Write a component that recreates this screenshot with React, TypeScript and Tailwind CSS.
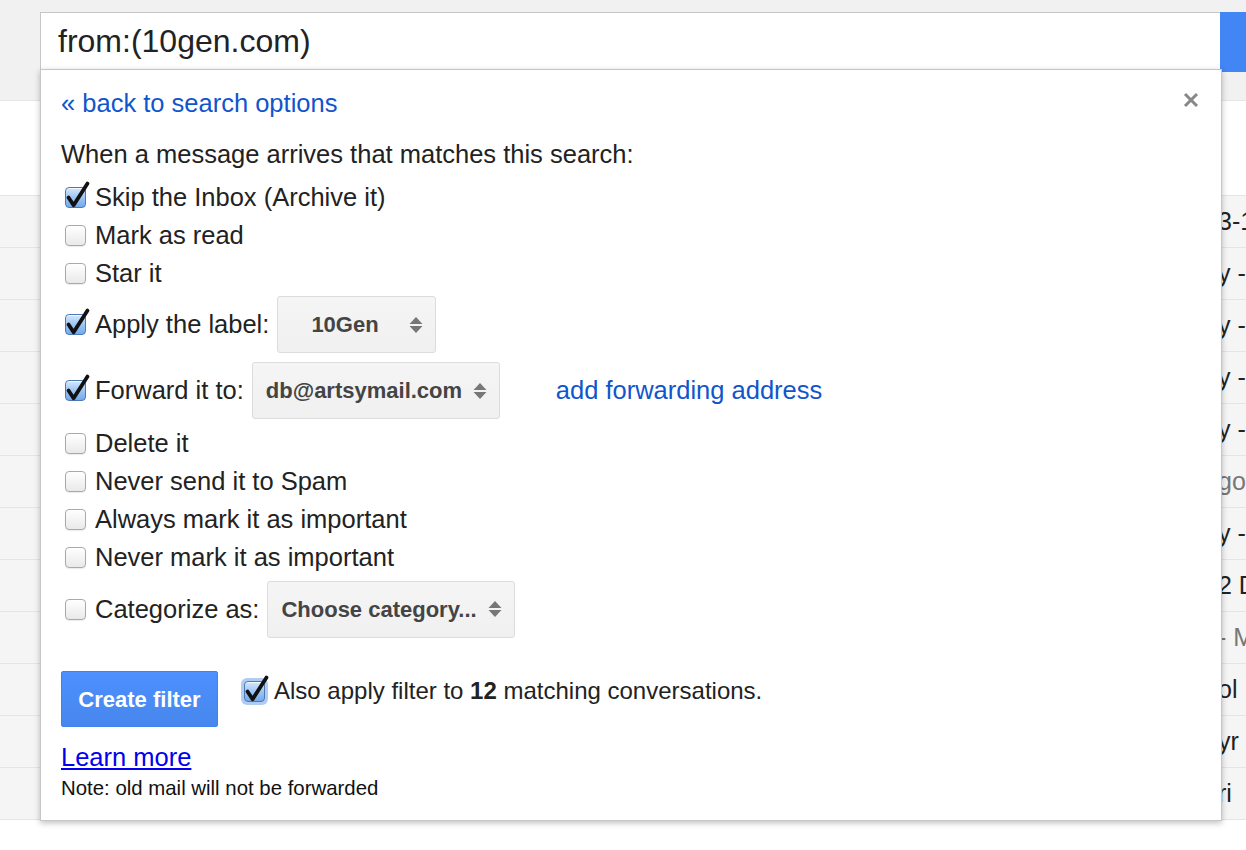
import React from 'react';

/**
 * Gmail "create filter" dropdown, shown under the search box.
 */

const font = "font-['Liberation_Sans',Arial,sans-serif]";

// Message list behind the dropdown: only a sliver of each row shows at the right edge
const listRows: { text: string; muted?: boolean }[] = [
  { text: '3-1' },
  { text: 'y -' },
  { text: 'y -' },
  { text: 'y -' },
  { text: 'y -' },
  { text: 'go', muted: true },
  { text: 'y -' },
  { text: '2 D' },
  { text: '- M', muted: true },
  { text: 'ol' },
  { text: 'yr' },
  { text: 'ri' },
];

function Checkbox({ checked = false, focused = false }: { checked?: boolean; focused?: boolean }) {
  return (
    <span className="relative inline-block w-[21px] h-[21px] shrink-0">
      {focused && (
        <span className="absolute -inset-[3px] rounded-[6px] bg-[#8fb6ea] opacity-70" />
      )}
      <span
        className={
          checked
            ? 'absolute inset-0 rounded-[4px] border border-[#4b79b8] bg-gradient-to-b from-[#d6e8fd] via-[#9ec5f4] to-[#74a9ec] shadow-[inset_0_1px_0_rgba(255,255,255,0.7)]'
            : 'absolute inset-0 rounded-[4px] border border-[#a9a9a9] bg-gradient-to-b from-[#ffffff] to-[#e9e9e9] shadow-[0_1px_1px_rgba(0,0,0,0.08)]'
        }
      />
      {checked && (
        <svg
          className="absolute left-0 top-0 overflow-visible"
          width="21"
          height="21"
          viewBox="0 0 21 21"
        >
          <path
            d="M3.5 10.5 L8.6 18.2 L22.5 -3.5"
            fill="none"
            stroke="#111"
            strokeWidth="3.8"
            strokeLinecap="round"
            strokeLinejoin="round"
          />
        </svg>
      )}
    </span>
  );
}

function SelectBox({ label, width, padLeft }: { label: string; width: string; padLeft: string }) {
  return (
    <div
      className={`flex items-center h-[57px] ${width} ${padLeft} pr-[12px] rounded-[3px] border border-[#dcdcdc] bg-gradient-to-b from-[#f5f5f5] to-[#f0f0f0] text-[22px] font-bold text-[#444]`}
    >
      <span className="flex-1 whitespace-nowrap">{label}</span>
      <svg width="14" height="18" viewBox="0 0 14 18" className="shrink-0">
        <path d="M7 1 L13.5 8 H0.5 Z" fill="#777" />
        <path d="M7 17 L13.5 10 H0.5 Z" fill="#777" />
      </svg>
    </div>
  );
}

function Row({
  checked,
  label,
  height = 'h-[38px]',
  children,
}: {
  checked?: boolean;
  label: string;
  height?: string;
  children?: React.ReactNode;
}) {
  return (
    <div className={`flex items-center ${height}`}>
      <span className="pl-[4px] pr-[9px] flex items-center">
        <Checkbox checked={checked} />
      </span>
      <span className="whitespace-nowrap">{label}</span>
      {children}
    </div>
  );
}

export default function App() {
  return (
    <div className={`relative w-[1246px] h-[850px] overflow-hidden bg-white text-[#222] ${font}`}>
      {/* Header with search box */}
      <div className="h-[101px] bg-[#f1f1f1] border-b border-[#e5e5e5] pt-[12px] pl-[40px] flex items-start">
        <div className="w-[1180px] h-[58px] border border-[#c6c6c6] border-r-0 bg-white flex items-center pl-[17px] text-[32px] text-[#222]">
          from:(10gen.com)
        </div>
        <div className="flex-1 h-[60px] bg-[#4285f4]" />
      </div>

      {/* Toolbar area */}
      <div className="h-[95px] border-b border-[#e5e5e5]" />

      {/* Message list (mostly hidden under the dropdown) */}
      <div>
        {listRows.map((r, i) => (
          <div
            key={i}
            className={`h-[52px] bg-[#f5f5f5] border-b border-[#e5e5e5] flex items-center pl-[1218px] text-[25px] whitespace-nowrap ${
              r.muted ? 'text-[#777]' : 'text-[#222]'
            }`}
          >
            {r.text}
          </div>
        ))}
      </div>

      {/* Filter dropdown */}
      <div className="absolute left-[40px] top-[69px] w-[1182px] h-[752px] bg-white border border-[#c6c6c6] shadow-[0_2px_6px_rgba(0,0,0,0.25)] pl-[20px] pt-[18px] text-[25.5px] text-[#222]">
        <button className="absolute right-[22px] top-[22px] w-[16px] h-[16px]">
          <svg width="16" height="16" viewBox="0 0 16 16">
            <path d="M2 2 L14 14 M14 2 L2 14" stroke="#888" strokeWidth="3" />
          </svg>
        </button>

        <div className="h-[30px] leading-[30px] text-[#15c]">« back to search options</div>
        <div className="mt-[21px] h-[30px] leading-[30px]">When a message arrives that matches this search:</div>

        <div className="mt-[9px]">
          <Row checked label="Skip the Inbox (Archive it)" />
          <Row label="Mark as read" />
          <Row label="Star it" />
          <Row checked label="Apply the label:" height="h-[65px]">
            <div className="ml-[8px]">
              <SelectBox label="10Gen" width="w-[159px]" padLeft="pl-[33px]" />
            </div>
          </Row>
          <Row checked label="Forward it to:" height="h-[67px]">
            <div className="ml-[8px]">
              <SelectBox label="db@artsymail.com" width="w-[248px]" padLeft="pl-[13px]" />
            </div>
            <span className="ml-[56px] text-[#15c]">add forwarding address</span>
          </Row>
          <Row label="Delete it" />
          <Row label="Never send it to Spam" />
          <Row label="Always mark it as important" />
          <Row label="Never mark it as important" />
          <Row label="Categorize as:" height="h-[66px]">
            <div className="ml-[8px]">
              <SelectBox label="Choose category..." width="w-[248px]" padLeft="pl-[13px]" />
            </div>
          </Row>
        </div>

        <div className="mt-[29px] flex items-start">
          <button className="w-[157px] h-[56px] rounded-[2px] border border-[#3f82ee] bg-gradient-to-b from-[#4d90fe] to-[#4787ed] text-white text-[22px] font-bold">
            Create filter
          </button>
          <div className="ml-[26px] mt-[5px] h-[30px] flex items-center">
            <Checkbox checked focused />
            <span className="ml-[9px] whitespace-nowrap text-[24px]">
              Also apply filter to <b>12</b> matching conversations.
            </span>
          </div>
        </div>

        <div className="mt-[15px] h-[30px] leading-[30px]">
          <a className="text-[#0000ee] underline">Learn more</a>
        </div>
        <div className="mt-[4px] h-[24px] leading-[24px] text-[20.4px] text-[#111]">
          Note: old mail will not be forwarded
        </div>
      </div>
    </div>
  );
}
